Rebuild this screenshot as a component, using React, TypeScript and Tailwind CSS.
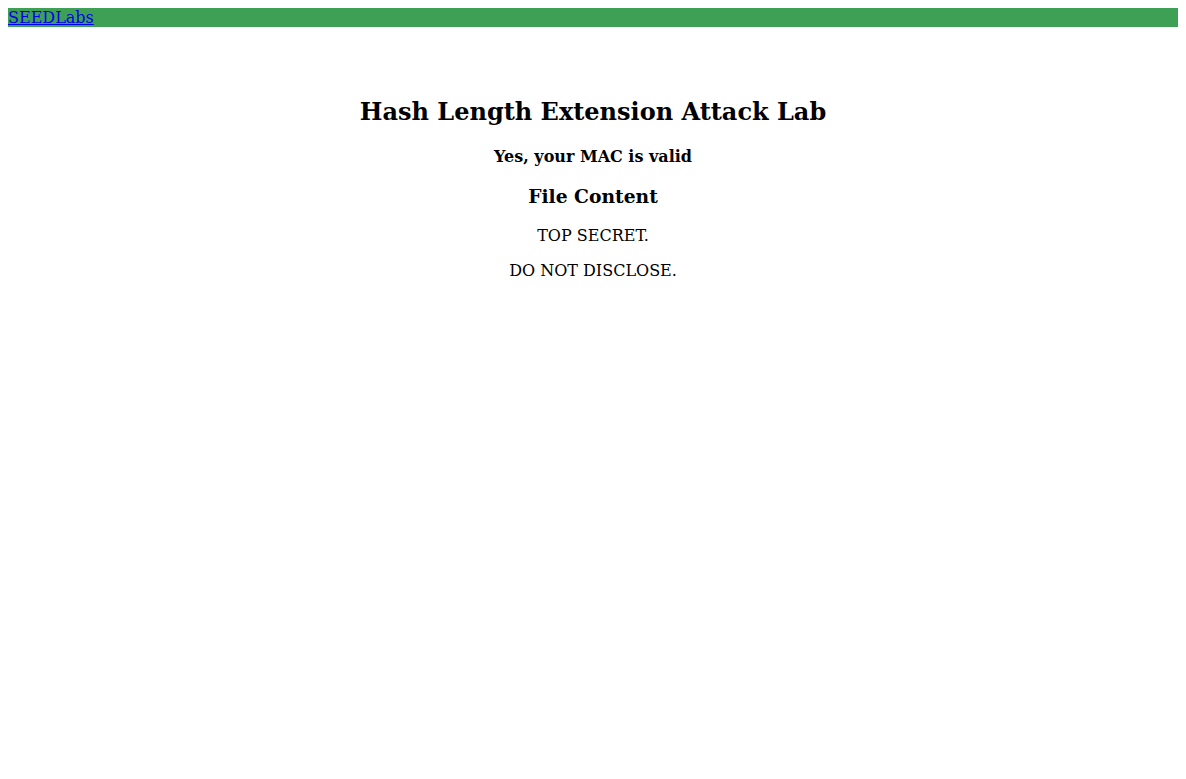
export default function App() {
  return (
    <div className="min-h-[779px] bg-white p-2 font-['DejaVu_Serif',serif] text-black">
      <nav className="h-[19px] bg-[#3ea055] text-[16px] leading-[19px]">
        <a href="#" className="text-[#0000ee] underline">
          SEEDLabs
        </a>
      </nav>
      <main className="flex flex-col items-center pt-[71px]">
        <h1 className="text-[24px] font-bold leading-[28px]">Hash Length Extension Attack Lab</h1>
        <h4 className="mt-[21px] text-[16px] font-bold leading-[19px]">Yes, your MAC is valid</h4>
        <h3 className="mt-[19px] text-[18.72px] font-bold leading-[22px]">File Content</h3>
        <p className="mt-[19px] text-[16px] leading-[19px]">TOP SECRET.</p>
        <p className="mt-[16px] text-[16px] leading-[19px]">DO NOT DISCLOSE.</p>
      </main>
    </div>
  );
}
